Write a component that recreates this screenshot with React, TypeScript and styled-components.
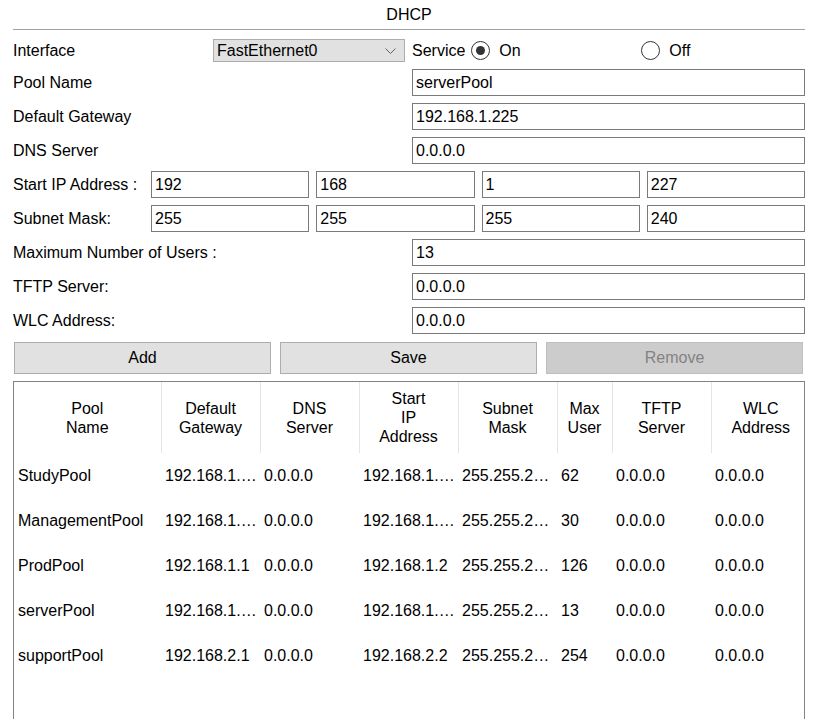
import React from "react";
import styled, { createGlobalStyle } from "styled-components";

const GlobalStyle = createGlobalStyle`
  html, body {
    margin: 0;
    padding: 0;
    overflow: hidden;
    background: #ffffff;
  }
  * {
    box-sizing: border-box;
  }
`;

const Page = styled.div`
  width: 817px;
  height: 719px;
  padding: 0 12px 0 13px;
  display: flex;
  flex-direction: column;
  font-family: "Liberation Sans", Arial, sans-serif;
  font-size: 16px;
  color: #000000;
`;

const Title = styled.div`
  height: 31px;
  line-height: 29px;
  text-align: center;
  border-bottom: 1px solid #a0a0a0;
  margin-bottom: 9px;
`;

const Form = styled.div`
  display: flex;
  flex-direction: column;
  gap: 7px;
`;

const FieldRow = styled.div<{ $labelWidth: number; $cols: number }>`
  display: grid;
  grid-template-columns: ${(p) => p.$labelWidth}px repeat(${(p) => p.$cols}, 1fr);
  column-gap: 7px;
  align-items: center;
  height: 27px;
`;

const InterfaceRow = styled.div`
  display: grid;
  grid-template-columns: 193px 192px 1fr;
  column-gap: 7px;
  align-items: center;
  height: 23px;
`;

const Label = styled.span`
  white-space: nowrap;
`;

const TextInput = styled.input`
  width: 100%;
  height: 27px;
  border: 1px solid #7a7a7a;
  background: #ffffff;
  padding: 0 3px;
  font: inherit;
  color: #000000;
  outline: none;
  min-width: 0;
`;

const SelectBox = styled.div`
  position: relative;
  height: 23px;
  border: 1px solid #adadad;
  background: #e1e1e1;
  padding: 0 3px;
  line-height: 21px;
  svg {
    position: absolute;
    right: 8px;
    top: 8px;
  }
`;

const ServiceGroup = styled.div`
  display: flex;
  align-items: center;
`;

const RadioOption = styled.label<{ $width?: number }>`
  display: flex;
  align-items: center;
  gap: 9px;
  width: ${(p) => (p.$width ? `${p.$width}px` : "auto")};
`;

const RadioCircle = styled.span<{ $checked?: boolean }>`
  width: 19px;
  height: 19px;
  border-radius: 50%;
  border: 1px solid #333333;
  display: flex;
  align-items: center;
  justify-content: center;
  &::after {
    content: "";
    width: 9px;
    height: 9px;
    border-radius: 50%;
    background: ${(p) => (p.$checked ? "#333333" : "transparent")};
  }
`;

const ButtonBar = styled.div`
  display: grid;
  grid-template-columns: repeat(3, 1fr);
  column-gap: 9px;
  padding: 0 2px 0 1px;
  margin-top: 8px;
`;

const Button = styled.button<{ $disabled?: boolean }>`
  height: 32px;
  font: inherit;
  border: 1px solid ${(p) => (p.$disabled ? "#bfbfbf" : "#adadad")};
  background: ${(p) => (p.$disabled ? "#cccccc" : "#e1e1e1")};
  color: ${(p) => (p.$disabled ? "#838383" : "#000000")};
  padding: 0;
`;

const TableBox = styled.div`
  margin-top: 7px;
  border: 1px solid #828282;
  flex: 1;
  min-height: 360px;
  overflow: hidden;
`;

const Table = styled.table<{ $width: number }>`
  border-collapse: collapse;
  table-layout: fixed;
  width: ${(p) => p.$width}px;
`;

const HeadCell = styled.th`
  height: 71px;
  padding: 0 4px;
  font-weight: normal;
  text-align: center;
  vertical-align: middle;
  line-height: 19px;
  border-left: 1px solid #e5e5e5;
  &:first-child {
    border-left: none;
  }
`;

const Cell = styled.td`
  height: 45px;
  padding: 0 0 0 4px;
  white-space: nowrap;
  overflow: hidden;
`;

const columns: { title: React.ReactNode; width: number }[] = [
  { title: <>Pool<br />Name</>, width: 147 },
  { title: <>Default<br />Gateway</>, width: 99 },
  { title: <>DNS<br />Server</>, width: 99 },
  { title: <>Start<br />IP<br />Address</>, width: 99 },
  { title: <>Subnet<br />Mask</>, width: 99 },
  { title: <>Max<br />User</>, width: 55 },
  { title: <>TFTP<br />Server</>, width: 99 },
  { title: <>WLC<br />Address</>, width: 99 },
];

const tableWidth = columns.reduce((sum, c) => sum + c.width, 0);

const pools = [
  ["StudyPool", "192.168.1.\u2026", "0.0.0.0", "192.168.1.\u2026", "255.255.2\u2026", "62", "0.0.0.0", "0.0.0.0"],
  ["ManagementPool", "192.168.1.\u2026", "0.0.0.0", "192.168.1.\u2026", "255.255.2\u2026", "30", "0.0.0.0", "0.0.0.0"],
  ["ProdPool", "192.168.1.1", "0.0.0.0", "192.168.1.2", "255.255.2\u2026", "126", "0.0.0.0", "0.0.0.0"],
  ["serverPool", "192.168.1.\u2026", "0.0.0.0", "192.168.1.\u2026", "255.255.2\u2026", "13", "0.0.0.0", "0.0.0.0"],
  ["supportPool", "192.168.2.1", "0.0.0.0", "192.168.2.2", "255.255.2\u2026", "254", "0.0.0.0", "0.0.0.0"],
];

const singleFields = [
  ["Pool Name", "serverPool"],
  ["Default Gateway", "192.168.1.225"],
  ["DNS Server", "0.0.0.0"],
];

const lowerFields = [
  ["Maximum Number of Users :", "13"],
  ["TFTP Server:", "0.0.0.0"],
  ["WLC Address:", "0.0.0.0"],
];

const App = () => {
  return (
    <Page>
      <GlobalStyle />
      <Title>DHCP</Title>
      <Form>
        <InterfaceRow>
          <Label>Interface</Label>
          <SelectBox>
            FastEthernet0
            <svg width="11" height="6" viewBox="0 0 11 6">
              <path d="M0.5 0.5 L5.5 5.5 L10.5 0.5" fill="none" stroke="#606060" strokeWidth="1" />
            </svg>
          </SelectBox>
          <ServiceGroup>
            <Label style={{ marginRight: 6 }}>Service</Label>
            <RadioOption $width={170}>
              <RadioCircle $checked />
              On
            </RadioOption>
            <RadioOption>
              <RadioCircle />
              Off
            </RadioOption>
          </ServiceGroup>
        </InterfaceRow>

        {singleFields.map(([label, value]) => (
          <FieldRow key={label} $labelWidth={392} $cols={1}>
            <Label>{label}</Label>
            <TextInput defaultValue={value} />
          </FieldRow>
        ))}

        <FieldRow $labelWidth={131} $cols={4}>
          <Label>Start IP Address :</Label>
          {["192", "168", "1", "227"].map((v, i) => (
            <TextInput key={i} defaultValue={v} />
          ))}
        </FieldRow>
        <FieldRow $labelWidth={131} $cols={4}>
          <Label>Subnet Mask:</Label>
          {["255", "255", "255", "240"].map((v, i) => (
            <TextInput key={i} defaultValue={v} />
          ))}
        </FieldRow>

        {lowerFields.map(([label, value]) => (
          <FieldRow key={label} $labelWidth={392} $cols={1}>
            <Label>{label}</Label>
            <TextInput defaultValue={value} />
          </FieldRow>
        ))}
      </Form>

      <ButtonBar>
        <Button>Add</Button>
        <Button>Save</Button>
        <Button $disabled>Remove</Button>
      </ButtonBar>

      <TableBox>
        <Table $width={tableWidth}>
          <colgroup>
            {columns.map((c, i) => (
              <col key={i} style={{ width: c.width }} />
            ))}
          </colgroup>
          <thead>
            <tr>
              {columns.map((c, i) => (
                <HeadCell key={i}>{c.title}</HeadCell>
              ))}
            </tr>
          </thead>
          <tbody>
            {pools.map((row) => (
              <tr key={row[0]}>
                {row.map((v, i) => (
                  <Cell key={i}>{v}</Cell>
                ))}
              </tr>
            ))}
          </tbody>
        </Table>
      </TableBox>
    </Page>
  );
};

export default App;
